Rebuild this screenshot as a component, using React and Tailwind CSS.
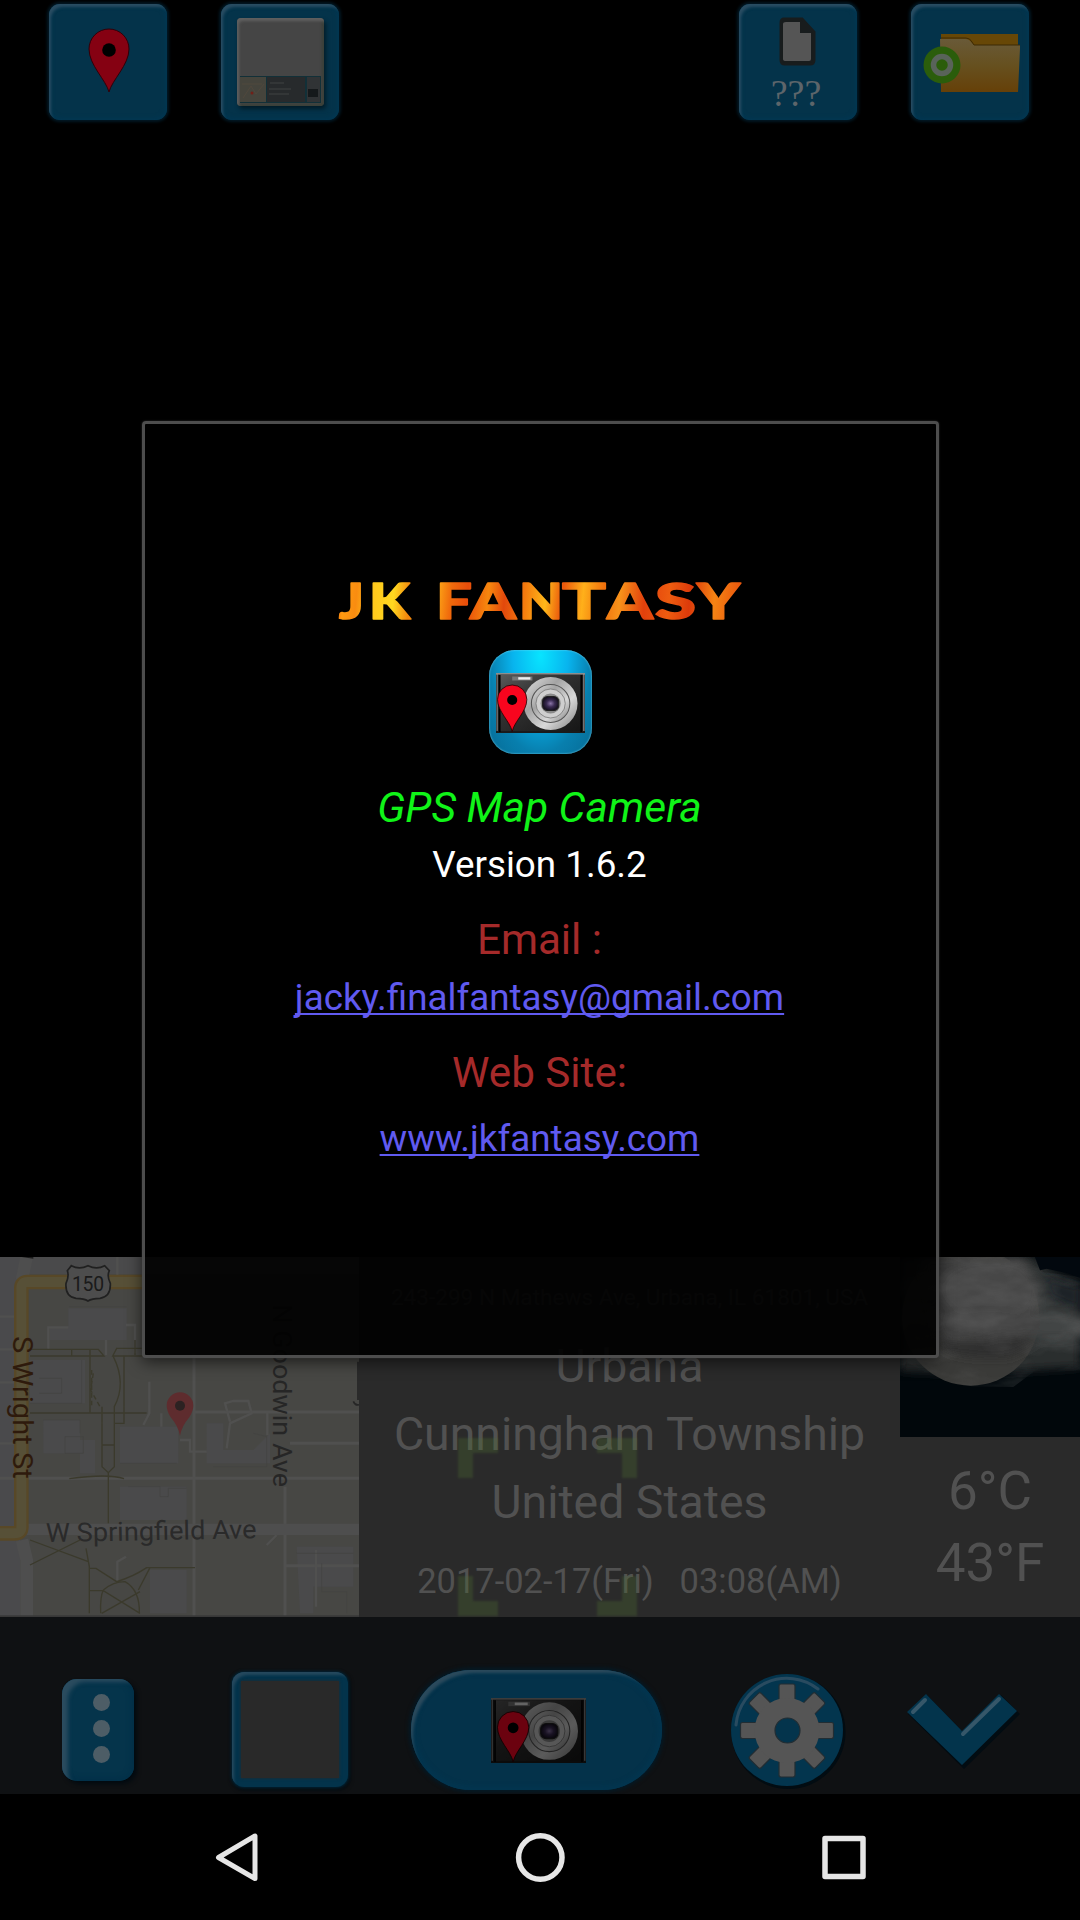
import React from "react";

function Pin({ x, y, fill = "#7f0312" }) {
  return (
    <g transform={`translate(${x} ${y})`}>
      <path d="M0 43 C-3 31 -20 16 -20 0 A20 20 0 0 1 20 0 C20 16 3 31 0 43Z" fill={fill} stroke="#300008" strokeWidth="1" />
      <circle r="6.8" cy="1" fill="#000" />
    </g>
  );
}

function Tile({ children }) {
  return (
    <div className="flex h-[116px] w-[118px] items-center justify-center rounded-[11px] bg-[#04334a] shadow-[inset_3px_4px_3px_-1px_#2a4d62,inset_0_0_4px_2px_#023752,0_0_3px_2px_#021824]">
      {children}
    </div>
  );
}

function Camera({ pin = "#f8051e", pinX = 16.8, pinY = 26, className }) {
  return (
    <svg viewBox="0 0 88 60" preserveAspectRatio="none" className={className}>
      <defs>
        <linearGradient id="body" x1="0" y1="0" x2="1" y2="1">
          <stop offset="0" stopColor="#5a5a5a" />
          <stop offset=".4" stopColor="#303030" />
          <stop offset="1" stopColor="#161616" />
        </linearGradient>
        <linearGradient id="ring" x1="0" y1="0" x2="1" y2="1">
          <stop offset="0" stopColor="#e2e2e2" />
          <stop offset=".35" stopColor="#a4a4a4" />
          <stop offset=".65" stopColor="#d8d8d8" />
          <stop offset="1" stopColor="#7d7d7d" />
        </linearGradient>
        <radialGradient id="glass">
          <stop offset="0" stopColor="#8a74a8" />
          <stop offset=".5" stopColor="#3a2b52" />
          <stop offset="1" stopColor="#15101f" />
        </radialGradient>
      </defs>
      <rect width="88" height="60" fill="#1a1a1a" />
      <rect x="3" y="2" width="82" height="56" fill="url(#body)" />
      <rect width="88" height="1.6" fill="#8d8d8d" />
      <rect x=".6" y="1" width="1" height="57" fill="#999" />
      <rect x="86.4" y="1" width="1" height="57" fill="#aaa" />
      <rect x="3" y="2" width="1.5" height="57" fill="#000" />
      <rect x="83.5" y="2" width="1.5" height="57" fill="#000" />
      <rect x="16" y="3.5" width="20" height="4" fill="#777" />
      <rect x="22" y="4.2" width="12" height="2.4" fill="#eee" />
      <circle cx="54" cy="30.5" r="26.6" fill="url(#ring)" />
      <circle cx="54" cy="30.5" r="19" fill="url(#ring)" stroke="#555" strokeWidth="1" />
      <circle cx="54" cy="30.5" r="14.5" fill="#cfcfcf" stroke="#777" strokeWidth=".8" />
      <circle cx="54" cy="30.5" r="10" fill="#8a8a8a" />
      <rect x="46" y="23.5" width="16" height="14" rx="5" fill="url(#glass)" stroke="#222" />
      <g transform={`translate(${pinX} ${pinY})`}>
        <path d="M0 32 C-2 22 -14.5 12 -14.5 0 A14.5 14.5 0 0 1 14.5 0 C14.5 12 2 22 0 32Z" fill={pin} stroke="#200" strokeWidth=".8" />
        <circle r="5" cy=".5" fill="#000" />
      </g>
    </svg>
  );
}

function TopBar() {
  return (
    <div className="flex h-[130px] justify-between pl-[49px] pr-[51px] pt-1">
      <div className="flex gap-[54px]">
        <Tile>
          <svg viewBox="0 0 118 116" className="h-full w-full">
            <Pin x={60} y={45} fill="#850112" />
          </svg>
        </Tile>
        <Tile>
          <div className="flex h-[88px] w-[87px] flex-col justify-end rounded-[4px] bg-[#454545] p-[3px] shadow-[inset_2px_3px_3px_#606060,inset_-2px_-2px_3px_#3a4038,2px_3px_4px_#021c28]">
            <svg viewBox="0 0 81 27" className="h-[27px] w-full">
              <rect width="81" height="27" fill="#123038" />
              <rect y="1" width="26" height="25" fill="#45443c" />
              <path d="M3 22l8-12 5 8 8-10M2 8h20" stroke="#50483d" fill="none" />
              <circle cx="12" cy="17" r="1.5" fill="#702018" />
              <rect x="27" y="1" width="38" height="25" fill="#272a2c" />
              <path d="M30 7h14M29 13h22M29 18h20" stroke="#404242" strokeWidth="1.2" />
              <rect x="67" y="1" width="13" height="25" fill="#303335" />
              <rect x="68" y="13" width="10" height="8" fill="#15191b" />
            </svg>
          </div>
        </Tile>
      </div>
      <div className="flex gap-[54px]">
        <Tile>
          <div className="flex h-full flex-col items-center">
            <svg viewBox="0 0 38 50" className="mt-[13px] h-[50px] w-[38px]">
              <path d="M5 2h18l12 13v28q0 4-4 4H6q-4 0-4-4V6q0-4 3-4Z" fill="#181c1d" stroke="#181c1d" strokeWidth="3" />
              <path d="M7 5h14v11h11v26q0 2-2 2H7q-3 0-3-2V7q0-2 3-2Z" fill="#555" />
            </svg>
            <span className="h-[48px] pr-1 font-['Liberation_Serif',serif] text-[38px] leading-[52px] text-[#5d656a]">???</span>
          </div>
        </Tile>
        <Tile>
          <svg viewBox="0 0 118 116" className="h-full w-full">
            <defs>
              <linearGradient id="fold" x1="0" y1="0" x2="0" y2="1">
                <stop offset="0" stopColor="#695a38" />
                <stop offset=".5" stopColor="#66501f" />
                <stop offset="1" stopColor="#664008" />
              </linearGradient>
            </defs>
            <path d="M30 30h77v15H30Z" fill="#674706" />
            <path d="M29 35h25q4 0 6 3l3 3h46v3l-2 44H30Z" fill="url(#fold)" />
            <path d="M30 34h25q4 0 6 4l2 3h46" fill="none" stroke="#3d2a04" strokeWidth="1" />
            <circle cx="31" cy="61" r="18.5" fill="#2b5d0b" />
            <circle cx="31" cy="61" r="8.5" fill="#2b5d0b" stroke="#59635a" strokeWidth="5.5" />
          </svg>
        </Tile>
      </div>
    </div>
  );
}

const MAP_FONT = "Roboto, sans-serif";

function MapView() {
  return (
    <svg viewBox="0 51 1077 1080" preserveAspectRatio="none" className="h-[360px] w-[359px] shrink-0">
      <rect y="51" width="1077" height="1080" fill="#474744" />
      <rect y="51" width="60" height="1080" fill="#4a4a4c" />
      <g fill="#4a4a4b">
        <rect x="90" y="51" width="987" height="52" />
        <path d="M205 205h175v95h-230v-40h55ZM90 360h165v130h-165ZM130 540h110v60h45v100h-45v-60h-110ZM360 560h175v110h-175ZM360 740h200v100h-200ZM620 550h50v80h90l50-50v90h-190ZM890 920h170v120h-120v80h-40ZM450 990h110v130h-110Z" />
      </g>
      <g stroke="#50504f" fill="none" strokeWidth="14">
        <path d="M582 340V1131M0 715H1077M582 516H1077M855 740V1131M870 610H1077M855 977H1077" strokeWidth="9" />
        <path d="M80 868H1077" strokeWidth="34" stroke="#4e4e4e" />
        <path d="M80 51L66 120M66 900L80 960V1131" strokeWidth="38" stroke="#4e4e4e" />
        <path d="M0 427H45M0 328H45M0 610H45M0 230H45M352 51V105M145 330V262H205M378 255H405V340M318 300V345M448 425V520L430 555M484 520V560M690 545L675 490L700 483H745L755 520L690 550L680 625M802 516V585M540 600H570V635H620M352 1030V965L378 950M948 930V1100M800 915L830 885" strokeWidth="7" />
      </g>
      <g fill="none">
        <path d="M430 126H82Q64 126 64 145V862Q64 880 44 880H0" stroke="#584827" strokeWidth="44" />
        <path d="M430 126H82Q64 126 64 145V862Q64 880 44 880H0" stroke="#575037" strokeWidth="30" />
      </g>
      <g fill="none" stroke="#3b3a2c" strokeWidth="4">
        <path d="M90 328H295L312 348H90M270 330V520M215 328V348M430 325H350L338 348H430M405 300V345M372 350V550H345M340 350Q380 430 343 500V680L325 698L306 680V500M90 519H440M306 615H343M208 716Q325 700 372 716M325 698V850" />
        <path d="M90 900L265 965M90 975L240 900M258 925L268 980V1120M268 985H288L350 1025Q400 1010 440 983H585M270 1052H310L420 1120M310 1050Q340 1025 375 1025Q420 1050 418 1120M420 1055L305 1120M302 1120Q300 1070 310 1050M450 983L415 1050" />
        <path d="M275 390V500M280 400L272 450L300 500" strokeDasharray="14 9" />
      </g>
      <g stroke="#424241" fill="none" strokeWidth="2">
        <path d="M208 200H380M118 415H185V460H118M90 490H245V360M130 540H240V580M195 590H250V640H195ZM360 670H530M385 740H480V770H505V745H560M640 680H800V590L760 580M965 970V1055H1040V1120M890 940H1060" />
      </g>
      <path d="M202 92L214 77Q238 90 264 77Q290 90 314 77L328 92Q320 108 331 130Q333 170 300 175Q275 175 264 183Q253 175 228 175Q195 170 198 130Q208 108 202 92Z" fill="#4d4d4d" stroke="#202020" strokeWidth="5" />
      <text x="264" y="152" textAnchor="middle" fontSize="58" fontFamily={MAP_FONT} fill="#1a1a1a" textLength="96">150</text>
      <path d="M65 51H100V56Z" fill="#1c1c1c" />
      <g fontFamily={MAP_FONT}>
        <text transform="translate(38 288) rotate(90)" fontSize="84" fill="#2e1a0c" textLength="428" lengthAdjust="spacingAndGlyphs">S Wright St</text>
        <text transform="translate(818 193) rotate(90)" fontSize="76" fill="#262626" textLength="548" lengthAdjust="spacingAndGlyphs">N Goodwin Ave</text>
        <text transform="translate(138 906) rotate(-1)" fontSize="79" fill="#2a2a2a" textLength="632" lengthAdjust="spacingAndGlyphs">W Springfield Ave</text>
        <path d="M1060 484Q1066 498 1077 494M1074 365V480" stroke="#262626" strokeWidth="5" fill="none" />
      </g>
      <g transform="translate(540 497)">
        <path d="M0 90Q-5 62 -28 35Q-40 15 -40 0A40 40 0 0 1 40 0Q40 15 28 35Q5 62 0 90Z" fill="#5e2c2e" />
        <circle r="15" fill="#2c2222" />
      </g>
      <rect y="1126" width="1077" height="5" fill="#383838" />
    </svg>
  );
}

function Moon() {
  return (
    <svg viewBox="0 0 540 540" className="block h-[180px] w-[180px]">
      <defs>
        <filter id="soft" x="-30%" y="-30%" width="160%" height="160%">
          <feGaussianBlur stdDeviation="14" />
        </filter>
        <filter id="wisps" x="0" y="0" width="100%" height="100%">
          <feTurbulence type="fractalNoise" baseFrequency="0.006 0.014" numOctaves="4" seed="9" />
          <feColorMatrix values="0 0 0 0 .32  0 0 0 0 .32  0 0 0 0 .32  1.6 0 0 0 -.62" />
        </filter>
        <clipPath id="cloudClip">
          <path d="M0 0H405L430 45L540 60V340L400 345L340 390L215 388L120 370L20 315L0 350Z" />
        </clipPath>
      </defs>
      <rect width="540" height="540" fill="#01070b" />
      <g filter="url(#soft)">
        <path d="M0 0H400L470 50L540 80V330L380 340L200 350L0 340Z" fill="#2c2d2d" />
      </g>
      <circle cx="212" cy="180" r="206" fill="#3a3a38" />
      <g filter="url(#soft)">
        <path d="M60 0H380L420 120L400 240L120 260Z" fill="#3d3d3c" />
        <ellipse cx="270" cy="100" rx="150" ry="90" fill="#474747" />
        <ellipse cx="460" cy="205" rx="120" ry="42" fill="#434444" />
        <ellipse cx="270" cy="200" rx="150" ry="45" fill="#434343" />
        <path d="M130 255Q220 270 300 235L420 255L330 300Q200 310 130 280Z" fill="#2e2e2e" />
        <path d="M430 60L540 90V160L450 120Z" fill="#1c2227" />
      </g>
      <rect width="540" height="400" filter="url(#wisps)" clipPath="url(#cloudClip)" opacity=".25" />
      <path d="M405 0H540V62L500 48L440 35L420 40Z" fill="#02080e" />
    </svg>
  );
}

function InfoPanel() {
  return (
    <div className="relative flex h-[360px] bg-[#2a2a2a] font-['Roboto',sans-serif] text-[#515151]">
      <MapView />
      <div className="flex w-[541px] flex-col items-center whitespace-pre pt-[27px]">
        <div className="text-[22.6px] leading-[28px]">243-299 N Mathews Ave, Urbana, IL 61801, USA</div>
        <div className="mt-[20px] text-[46.4px] leading-[68px]">Urbana</div>
        <div className="text-[46.4px] leading-[68px]">Cunningham Township</div>
        <div className="text-[46.4px] leading-[68px]">United States</div>
        <div className="mt-[25px] text-[34.5px] leading-[40px]">2017-02-17(Fri)   03:08(AM)</div>
      </div>
      <div className="flex w-[180px] flex-col items-center">
        <Moon />
        <div className="mt-[18px] text-[53px] leading-[72px]">6°C</div>
        <div className="text-[53px] leading-[72px]">43°F</div>
      </div>
      <svg viewBox="0 0 179 178" className="absolute left-[458px] top-[181px] h-[178px] w-[179px] blur-[1px]">
        <path d="M0 0H40V15H15V40H0ZM139 0H179V40H164V15H139ZM0 138H15V163H40V178H0ZM164 138H179V178H139V163H164Z" fill="#4f6f33" opacity=".3" />
      </svg>
    </div>
  );
}

function Toolbar() {
  return (
    <div className="flex h-[177px] items-center bg-[#0f1113] pl-[62px] pt-[48px]">
      <div className="flex h-[102px] w-[72px] flex-col items-center gap-[9px] rounded-[15px] bg-[#05344b] pl-[7px] pt-[15px] shadow-[inset_9px_6px_4px_-3px_#2b4c5f,inset_0_0_4px_4px_#033149,3px_3px_4px_#020a10]">
        <i className="h-[17px] w-[17px] rounded-full bg-[#4d5d66]" />
        <i className="h-[17px] w-[17px] rounded-full bg-[#4d5d66]" />
        <i className="h-[17px] w-[17px] rounded-full bg-[#4d5d66]" />
      </div>
      <div className="ml-[98px] flex h-[115px] w-[116px] rounded-[12px] bg-[#03334b] p-[9px] shadow-[0_0_3px_1px_#032536,1px_2px_4px_1px_#020a10,inset_4px_5px_3px_-2px_#26495e]">
        <div className="flex-1 bg-[#292929] shadow-[0_0_3px_#292929]" />
      </div>
      <div className="ml-[63px] mt-[1px] flex h-[120px] w-[251px] items-center justify-center rounded-full bg-[#04324a] pl-[3px] shadow-[inset_5px_6px_3px_-3px_#2b4a5c,inset_0_0_4px_4px_#03354f,0_0_4px_2px_#031a27]">
        <Camera pin="#ff0424" pinX={20.5} pinY={27} className="h-[65px] w-[95px] brightness-[.42]" />
      </div>
      <svg viewBox="0 0 118 118" className="ml-[66px] h-[118px] w-[118px]">
        <circle cx="60.5" cy="61" r="57" fill="#020c12" />
        <circle cx="59" cy="59" r="56" fill="#03354e" />
        <path d="M8 54A51 51 0 0 1 90 18" fill="none" stroke="#294b60" strokeWidth="3" strokeLinecap="round" />
        <g fill="#555" stroke="#222d33" strokeWidth="1.2">
          {[0, 45, 90, 135, 180, 225, 270, 315].map((a) => (
            <path key={a} d="M51 35V15Q51 13 53 13H65Q67 13 67 15V35Z" transform={`rotate(${a} 59 59.5)`} />
          ))}
        </g>
        <circle cx="59" cy="59.5" r="32.5" fill="#555" />
        <circle cx="59.5" cy="59.5" r="12.5" fill="#04344c" stroke="#222d33" strokeWidth="1.2" />
      </svg>
      <svg viewBox="0 0 116 80" className="ml-[58px] mt-[2px] h-[80px] w-[116px]">
        <path d="M4 23L23 4L59 41L97 4L116 23L60 78Z" fill="#020c12" />
        <path d="M3 21L22 3L58 40L95 3L113 20L58 74Z" fill="#03344c" />
        <path d="M9 21L21 9M59 43L95 8" stroke="#365769" strokeWidth="4" strokeLinecap="round" />
      </svg>
    </div>
  );
}

function NavBar() {
  return (
    <div className="flex h-[126px] items-center justify-center gap-[240px] bg-black">
      <svg viewBox="0 0 60 60" className="h-[60px] w-[60px]" fill="none" stroke="#e6e6e6" strokeWidth="5" strokeLinejoin="round">
        <path d="M8.5 30.5L45 9V51.5Z" />
      </svg>
      <svg viewBox="0 0 60 60" className="h-[60px] w-[60px]" fill="none" stroke="#e6e6e6" strokeWidth="5.5">
        <circle cx="30.3" cy="30.5" r="21.7" />
      </svg>
      <svg viewBox="0 0 60 60" className="h-[60px] w-[60px]" fill="none" stroke="#e6e6e6" strokeWidth="5.5" strokeLinejoin="round">
        <rect x="15" y="11.5" width="38" height="38" />
      </svg>
    </div>
  );
}

// Each letter with its left edge and width.
const TITLE = [
  ["J", 6, 25], ["K", 36, 41], ["F", 103, 36], ["A", 137, 46], ["N", 186, 44],
  ["T", 229, 44], ["A", 274, 46], ["S", 322, 41], ["Y", 364, 43],
];

const FLAME_STOPS = [
  [0, "#e8500a"], [0.03, "#ff9a10"], [0.06, "#f98c10"], [0.1, "#ffc81c"], [0.15, "#ffd820"],
  [0.19, "#f2840c"], [0.25, "#ffae18"], [0.29, "#f06a0c"], [0.33, "#e84c0a"], [0.38, "#f7870e"],
  [0.42, "#e2480c"], [0.47, "#f57c0e"], [0.52, "#ffb81a"], [0.56, "#ea560c"], [0.61, "#ffb01a"],
  [0.66, "#f0700c"], [0.7, "#f8921a"], [0.76, "#e2400c"], [0.82, "#ee5c10"], [0.87, "#dc3a0a"],
  [0.93, "#f58414"], [1, "#e8500c"],
];

function FlameTitle() {
  return (
    <svg viewBox="0 0 416 80" className="mt-[138px] h-[80px] w-[416px] shrink-0">
      <defs>
        <linearGradient id="flame" gradientUnits="userSpaceOnUse" x1="0" y1="20" x2="408" y2="60">
          {FLAME_STOPS.map(([offset, color]) => (
            <stop key={offset} offset={offset} stopColor={color} />
          ))}
        </linearGradient>
      </defs>
      <g fontFamily="Lato, sans-serif" fontWeight="900" fontSize="49" fill="url(#flame)" stroke="url(#flame)" strokeWidth="1.6" strokeLinejoin="round">
        {TITLE.map(([ch, x, w]) => (
          <text key={x} x={x} y="57" textLength={w} lengthAdjust="spacingAndGlyphs">{ch}</text>
        ))}
      </g>
    </svg>
  );
}

function AboutDialog() {
  return (
    <div className="absolute left-[142px] top-[421px] flex h-[937px] w-[797px] flex-col items-center rounded-[4px] border-[3px] border-[#4d4d4d] bg-black/92 font-['Roboto',sans-serif] shadow-[0_0_2px_#333,0_4px_16px_rgba(0,0,0,.6)]">
      <FlameTitle />
      <div className="mt-[8px] flex h-[104px] w-[103px] shrink-0 items-center justify-center rounded-[26px] bg-[radial-gradient(ellipse_at_50%_5%,#08e4ff_0%,#08b4ee_38%,#087fae_70%,#066a94_100%)] pt-[2px] shadow-[inset_0_0_2px_#7fd8f0]">
        <Camera className="h-[60px] w-[89px]" pinX={16} pinY={26.5} />
      </div>
      <div className="mr-[2px] mt-[28px] text-[42.6px] italic leading-[50px] text-[#10f418]">GPS Map Camera</div>
      <div className="mr-[2px] mt-[12px] text-[36.8px] leading-[42px] text-white">Version 1.6.2</div>
      <div className="mr-[2px] mt-[29px] text-[42.2px] leading-[50px] text-[#a52a2a]">Email :</div>
      <a className="mr-[2px] mt-[12px] text-[36.8px] leading-[42px] text-[#605af0] underline decoration-2 underline-offset-[3px] [text-decoration-skip-ink:none]">jacky.finalfantasy@gmail.com</a>
      <div className="mr-[2px] mt-[29px] text-[42.2px] leading-[50px] text-[#a52a2a]">Web Site:</div>
      <a className="mr-[2px] mt-[20px] text-[36.8px] leading-[42px] text-[#605af0] underline decoration-2 underline-offset-[3px] [text-decoration-skip-ink:none]">www.jkfantasy.com</a>
    </div>
  );
}

export default function App() {
  return (
    <div className="relative flex h-[1920px] w-[1080px] flex-col overflow-hidden bg-black">
      <TopBar />
      <div className="flex-1" />
      <InfoPanel />
      <Toolbar />
      <NavBar />
      <AboutDialog />
    </div>
  );
}
